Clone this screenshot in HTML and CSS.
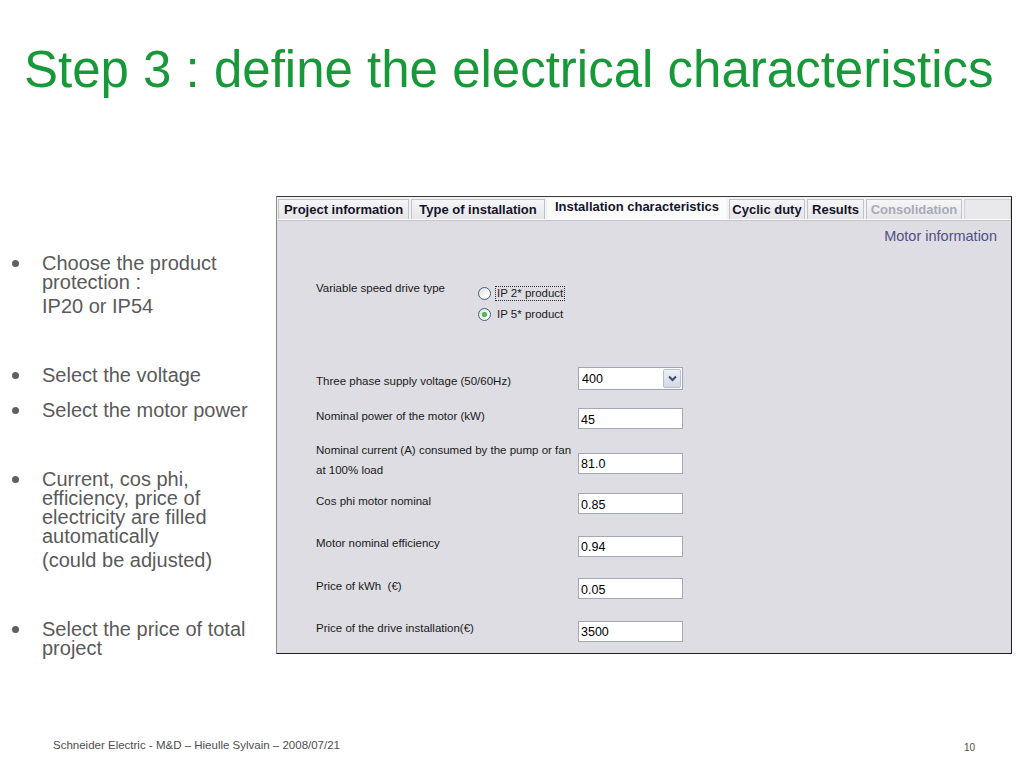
FILE: index.html
```html
<!DOCTYPE html>
<html lang="en">

<head>
    <meta charset="UTF-8">
    <meta name="viewport" content="width=device-width, initial-scale=1.0">
    <title>Step 3 : define the electrical characteristics</title>
    <link rel="stylesheet" href="styles.css">
</head>

<body>
    <div class="slide">
        <h1 class="title">Step 3 : define the electrical characteristics</h1>

        <div class="main">
            <ul class="points">
                <li class="point">
                    <span class="dot"></span>
                    <div class="point-text">
                        <p>Choose the product<br>protection :</p>
                        <p class="sub">IP20 or IP54</p>
                    </div>
                </li>
                <li class="point">
                    <span class="dot"></span>
                    <div class="point-text"><p>Select the voltage</p></div>
                </li>
                <li class="point tight">
                    <span class="dot"></span>
                    <div class="point-text"><p>Select the motor power</p></div>
                </li>
                <li class="point">
                    <span class="dot"></span>
                    <div class="point-text">
                        <p>Current, cos phi,<br>efficiency, price of<br>electricity are filled<br>automatically</p>
                        <p class="sub">(could be adjusted)</p>
                    </div>
                </li>
                <li class="point">
                    <span class="dot"></span>
                    <div class="point-text"><p>Select the price of total<br>project</p></div>
                </li>
            </ul>

            <div class="panel">
                <div class="tabs">
                    <div class="tab tab-project">Project information</div>
                    <div class="tab tab-type">Type of installation</div>
                    <div class="tab tab-install active">Installation characteristics</div>
                    <div class="tab tab-cyclic">Cyclic duty</div>
                    <div class="tab tab-results">Results</div>
                    <div class="tab tab-consol disabled">Consolidation</div>
                    <div class="tab-rest"></div>
                </div>

                <div class="panel-body">
                    <div class="motor-info">Motor information</div>

                    <div class="drive-row">
                        <span class="label">Variable speed drive type</span>
                        <div class="radios">
                            <div class="radio-line">
                                <span class="radio"></span>
                                <span class="radio-label focus">IP 2* product</span>
                            </div>
                            <div class="radio-line">
                                <span class="radio checked"></span>
                                <span class="radio-label">IP 5* product</span>
                            </div>
                        </div>
                    </div>

                    <div class="row row-voltage">
                        <span class="label label-low">Three phase supply voltage (50/60Hz)</span>
                        <div class="select">
                            <span class="select-value">400</span>
                            <span class="select-btn">
                                <svg width="9" height="7" viewBox="0 0 9 7">
                                    <path d="M1 1.5 L4.5 5 L8 1.5" fill="none" stroke="#3a4a78" stroke-width="2"/>
                                </svg>
                            </span>
                        </div>
                    </div>

                    <div class="row">
                        <span class="label">Nominal power of the motor (kW)</span>
                        <input class="field" type="text" value="45">
                    </div>

                    <div class="row">
                        <span class="label label-two">Nominal current (A) consumed by the pump or fan<br>at 100% load</span>
                        <input class="field" type="text" value="81.0">
                    </div>

                    <div class="row">
                        <span class="label">Cos phi motor nominal</span>
                        <input class="field" type="text" value="0.85">
                    </div>

                    <div class="row">
                        <span class="label">Motor nominal efficiency</span>
                        <input class="field" type="text" value="0.94">
                    </div>

                    <div class="row">
                        <span class="label">Price of kWh &nbsp;(€)</span>
                        <input class="field" type="text" value="0.05">
                    </div>

                    <div class="row">
                        <span class="label">Price of the drive installation(€)</span>
                        <input class="field" type="text" value="3500">
                    </div>
                </div>
            </div>
        </div>

        <div class="footer">
            <span>Schneider Electric - M&amp;D – Hieulle Sylvain – 2008/07/21</span>
            <span class="page-num">10</span>
        </div>
    </div>
</body>
</html>
```

FILE: styles.css
```css
body {
    margin: 0;
    padding: 0;
    background: white;
    font-family: "Liberation Sans", Arial, sans-serif;
}
.slide {
    width: 1024px;
    height: 768px;
    display: flex;
    flex-direction: column;
    overflow: hidden;
}
.title {
    margin: 40px 0 0 0;
    padding-left: 24px;
    height: 60px;
    line-height: 60px;
    font-size: 51px;
    font-weight: normal;
    color: #17993a;
    white-space: nowrap;
}
.main {
    display: flex;
    align-items: flex-start;
    margin-top: 96px;
}

/* left bullet list */
.points {
    list-style: none;
    margin: 0;
    padding: 57.5px 0 0 0;
    width: 276px;
    color: #5a5a5a;
    font-size: 20px;
    line-height: 19px;
}
.point {
    display: flex;
    align-items: flex-start;
    margin-top: 50px;
}
.point:first-child {
    margin-top: 0;
}
.point.tight {
    margin-top: 16px;
}
.dot {
    flex: none;
    width: 7px;
    height: 7px;
    margin: 6px 23px 0 12px;
    border-radius: 50%;
    background: #606060;
}
.point-text p {
    margin: 0;
    white-space: nowrap;
}
.point-text .sub {
    margin-top: 5px;
}

/* form window */
.panel {
    width: 734px;
    border-top: 1px solid #3a3a3a;
    border-left: 1px solid #8c8c8c;
    border-right: 1px solid #1e1e1e;
    border-bottom: 1px solid #1e1e1e;
    background: #dddde3;
}
.tabs {
    display: flex;
    align-items: flex-end;
    height: 22px;
    padding-left: 1px;
    background: #f2f2f4;
    border-bottom: 1px solid #ffffff;
    box-shadow: 0 1px 0 #c4c4cc;
}
.tab {
    flex: none;
    box-sizing: border-box;
    height: 20px;
    margin-right: 2px;
    line-height: 19px;
    font-size: 13px;
    font-weight: bold;
    color: #14142a;
    text-align: center;
    white-space: nowrap;
    border: 1px solid #c2c2ca;
    border-bottom: none;
    background: linear-gradient(#f6f6f8, #e6e6ea);
}
.tab.active {
    height: 22px;
    line-height: 17px;
    border-color: #f6f6f8;
    background: #fbfbfc;
}
.tab.disabled {
    color: #a9a9b8;
}
.tab-project { width: 131px; }
.tab-type { width: 134px; }
.tab-install { width: 180px; }
.tab-cyclic { width: 76px; }
.tab-results { width: 57px; }
.tab-consol { width: 96px; }
.tab-rest {
    flex: 1;
    box-sizing: border-box;
    height: 20px;
    border: 1px solid #cfcfd4;
    border-bottom: none;
    background: #e9e9eb;
}

.panel-body {
    padding: 0 0 0 39px;
}
.motor-info {
    margin-top: 6px;
    padding-right: 14px;
    height: 20px;
    line-height: 20px;
    text-align: right;
    font-size: 14.5px;
    color: #50508a;
}
.label {
    font-size: 11.5px;
    line-height: 14px;
    color: #1a1a1a;
    white-space: nowrap;
}
.drive-row {
    display: grid;
    grid-template-columns: 162px auto;
    align-items: start;
    margin-top: 35px;
}
.radios {
    margin-top: 2px;
}
.radio-line {
    display: flex;
    align-items: center;
    height: 21px;
}
.radio {
    position: relative;
    box-sizing: border-box;
    width: 13px;
    height: 13px;
    margin-right: 4px;
    border: 1px solid #3d5f86;
    border-radius: 50%;
    background: linear-gradient(135deg, #dcdcd6, #ffffff 70%);
}
.radio.checked::after {
    content: "";
    position: absolute;
    left: 3px;
    top: 3px;
    width: 5px;
    height: 5px;
    border-radius: 50%;
    background: radial-gradient(#5ed05e, #1f9a1f);
}
.radio-label {
    font-size: 11.5px;
    line-height: 13px;
    color: #1a1a1a;
    padding: 0 1px;
    border: 1px dotted transparent;
}
.radio-label.focus {
    border-color: #333;
}

.row {
    display: grid;
    grid-template-columns: 262px 105px;
    align-items: center;
    height: 42.5px;
}
.row .label {
    margin-bottom: 6px;
}
.row .label-two {
    line-height: 20px;
}
.row .label-low {
    margin-bottom: 0;
    margin-top: 5px;
}
.row-voltage {
    margin-top: 34.5px;
    height: 38px;
}
.field {
    box-sizing: border-box;
    width: 105px;
    height: 21px;
    margin: 0;
    padding: 2px 2px 0 2px;
    border: 1px solid #a3a8b4;
    background: white;
    font-family: "Liberation Sans", Arial, sans-serif;
    font-size: 12.5px;
    color: #000;
    outline: none;
}
.select {
    box-sizing: border-box;
    display: flex;
    align-items: center;
    justify-content: space-between;
    width: 105px;
    height: 23px;
    padding: 1px;
    border: 1px solid #9aa6ba;
    background: white;
}
.select-value {
    padding-left: 2px;
    font-size: 12.5px;
    color: #000;
}
.select-btn {
    box-sizing: border-box;
    display: flex;
    align-items: center;
    justify-content: center;
    width: 18px;
    height: 19px;
    border: 1px solid #b9bfcf;
    border-radius: 2px;
    background: linear-gradient(#eef0f6, #d4d8e4);
}

.footer {
    display: flex;
    justify-content: space-between;
    align-items: flex-end;
    margin-top: auto;
    padding: 0 49px 16px 53px;
    font-size: 11.5px;
    line-height: 14px;
    color: #4d4d4d;
}
.page-num {
    margin-bottom: -3px;
    font-size: 10px;
}
```
